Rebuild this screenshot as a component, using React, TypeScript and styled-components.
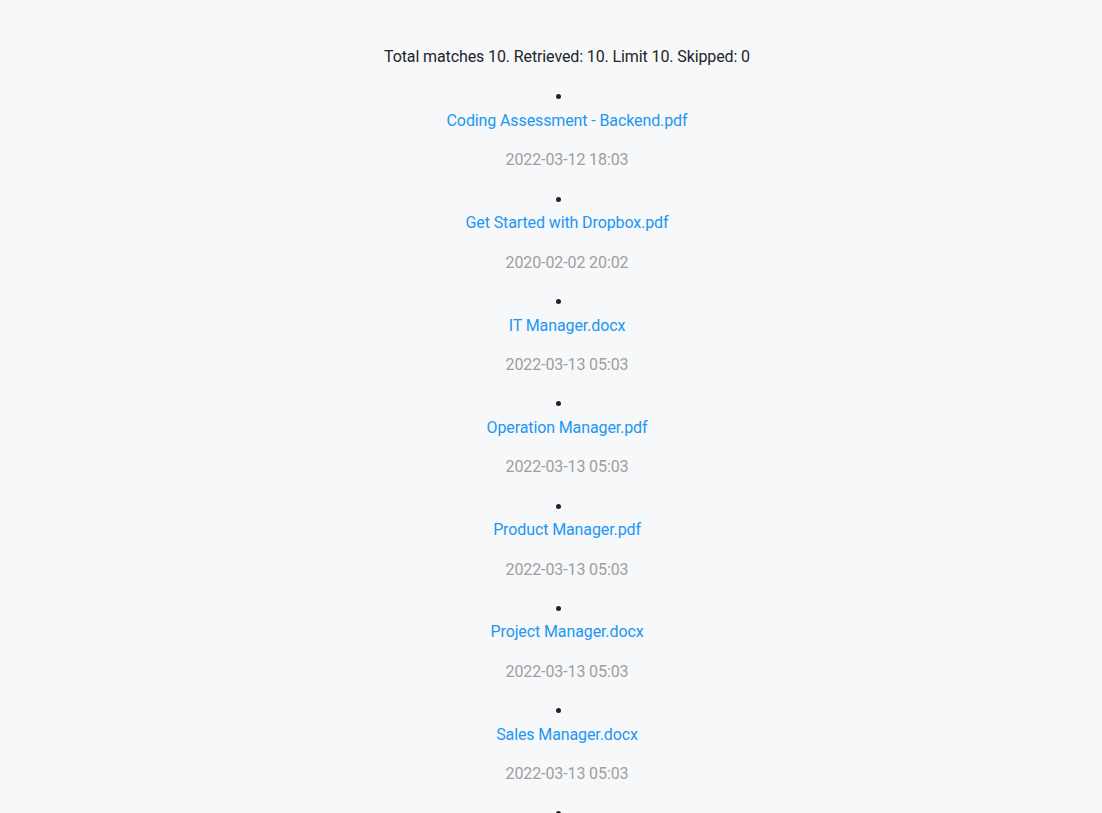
import React from "react";
import styled, { createGlobalStyle } from "styled-components";

const GlobalStyle = createGlobalStyle`
  html, body {
    margin: 0;
    padding: 0;
    background: #f7f8fa;
  }
  body {
    font-family: Roboto, "Noto Sans", Arial, sans-serif;
    font-size: 16px;
    line-height: 23.44px;
    letter-spacing: -0.11px;
    color: #212529;
  }
`;

const Page = styled.div`
  display: flex;
  flex-direction: column;
  align-items: center;
  text-align: center;
  padding: 45px 0 40px 32px;
`;

const Summary = styled.p`
  margin: 0;
  color: #212529;
`;

const FileList = styled.ul`
  list-style: disc inside;
  margin: 17px 0 0;
  padding: 0;
  width: 100%;
`;

const FileItem = styled.li`
  margin: 0;
  &::marker {
    color: #212529;
  }
`;

const FileLink = styled.a`
  display: block;
  color: #2196f3;
  text-decoration: none;
`;

const FileDate = styled.p`
  margin: 16px 0;
  color: #9e9e9e;
`;

const files = [
  { name: "Coding Assessment - Backend.pdf", date: "2022-03-12 18:03" },
  { name: "Get Started with Dropbox.pdf", date: "2020-02-02 20:02" },
  { name: "IT Manager.docx", date: "2022-03-13 05:03" },
  { name: "Operation Manager.pdf", date: "2022-03-13 05:03" },
  { name: "Product Manager.pdf", date: "2022-03-13 05:03" },
  { name: "Project Manager.docx", date: "2022-03-13 05:03" },
  { name: "Sales Manager.docx", date: "2022-03-13 05:03" },
  { name: "Software Engineer.docx", date: "2022-03-13 05:03" },
  { name: "UX Designer.pdf", date: "2022-03-13 05:03" },
  { name: "Welcome.pdf", date: "2022-03-13 05:03" },
];

export default function App() {
  return (
    <>
      <GlobalStyle />
      <Page>
        <Summary>Total matches 10. Retrieved: 10. Limit 10. Skipped: 0</Summary>
        <FileList>
          {files.map((f) => (
            <FileItem key={f.name}>
              <FileLink href="#">{f.name}</FileLink>
              <FileDate>{f.date}</FileDate>
            </FileItem>
          ))}
        </FileList>
      </Page>
    </>
  );
}
